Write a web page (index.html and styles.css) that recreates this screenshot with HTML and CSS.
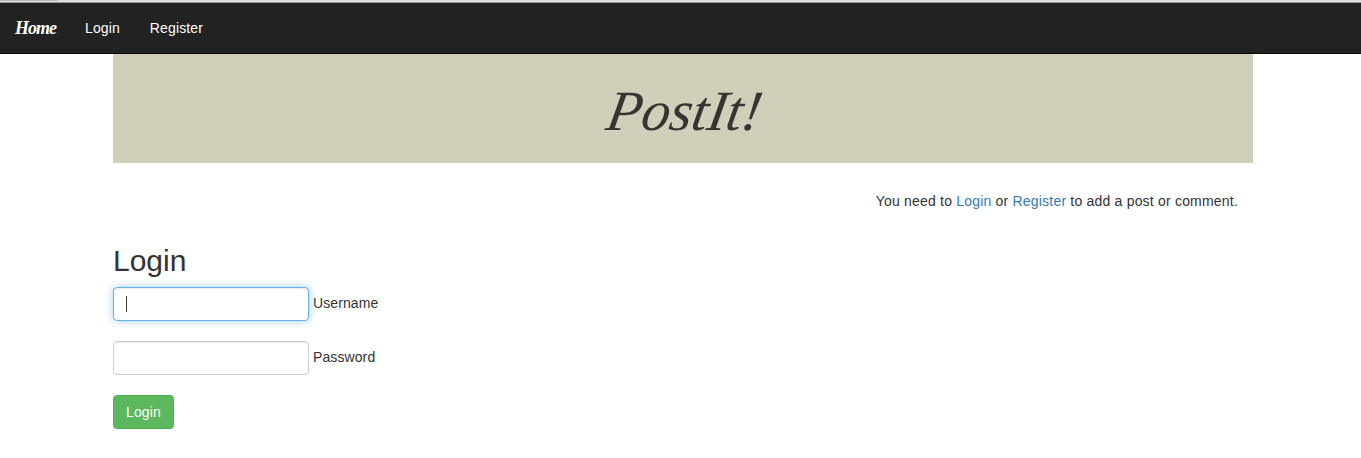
FILE: index.html
```html
<!DOCTYPE html>
<html lang="en">
<head>
  <meta charset="utf-8">
  <title>PostIt!</title>
  <link rel="stylesheet" href="styles.css">
</head>
<body>
  <div class="window-edge"><div class="window-tab"></div></div>
  <nav class="navbar">
    <a class="brand" href="#">Home</a>
    <a class="nav-link" href="#">Login</a>
    <a class="nav-link" href="#">Register</a>
  </nav>
  <main class="container">
    <header class="banner"><span class="banner-title">PostIt!</span></header>
    <p class="notice">You need to <a href="#">Login</a> or <a href="#">Register</a> to add a post or comment.</p>
    <h2 class="heading">Login</h2>
    <form class="form">
      <div class="field">
        <span class="control focused"><input class="input" id="username" type="text"></span>
        <label for="username">Username</label>
      </div>
      <div class="field">
        <span class="control"><input class="input" id="password" type="password"></span>
        <label for="password">Password</label>
      </div>
      <button class="button" type="button">Login</button>
    </form>
  </main>
</body>
</html>
```

FILE: styles.css
```css
* {
  box-sizing: border-box;
}

body {
  margin: 0;
  background: #fff;
  color: #333;
  font: 14px/20px "Liberation Sans", Arial, sans-serif;
  overflow: hidden;
}

a {
  color: #337ab7;
  text-decoration: none;
}

.window-edge {
  height: 3px;
  background: #dcdedc;
  border-bottom: 1px solid #999;
}

.window-tab {
  width: 58px;
  height: 1px;
  background: #bbb;
}

.navbar {
  display: flex;
  height: 51px;
  padding-top: 15px;
  background: #222;
  border-bottom: 1px solid #080808;
}

.navbar a {
  color: #fff;
}

.brand {
  width: 70px;
  padding-left: 15px;
  font: italic bold 18px/20px "Liberation Serif", serif;
  letter-spacing: -1px;
}

.nav-link {
  padding: 0 15px;
  letter-spacing: 0.12px;
}

.container {
  width: 1140px;
  margin-left: 113px;
}

.banner {
  display: flex;
  justify-content: center;
  height: 109px;
  padding-top: 27px;
  background: #d0d0ba;
}

.banner-title {
  color: #383432;
  font: italic 57px/60px "Liberation Serif", serif;
  letter-spacing: -0.2px;
  transform: skewX(-10deg);
}

.notice {
  margin: 28px 15px 0 0;
  text-align: right;
  letter-spacing: 0.2px;
}

.heading {
  margin: 33px 0 10px;
  font-size: 30px;
  font-weight: 500;
  line-height: 33px;
}

.form {
  display: flex;
  flex-direction: column;
  align-items: flex-start;
  gap: 20px;
}

.field {
  display: flex;
  gap: 4px;
  height: 34px;
  line-height: 32px;
  letter-spacing: 0.1px;
}

.control {
  position: relative;
}

.input {
  display: block;
  width: 196px;
  height: 34px;
  padding: 6px 12px;
  font: inherit;
  border: 1px solid #ccc;
  border-radius: 4px;
  box-shadow: inset 0 1px 1px rgba(0, 0, 0, 0.075);
  outline: none;
}

.focused .input {
  border-color: #66afe9;
  box-shadow: inset 0 1px 1px rgba(0, 0, 0, 0.075), 0 0 8px rgba(102, 175, 233, 0.6);
}

/* Text caret of the active field */
.focused::after {
  content: "";
  position: absolute;
  left: 13px;
  top: 9px;
  width: 1px;
  height: 16px;
  background: #333;
}

.button {
  width: 61px;
  height: 34px;
  padding: 0 12px;
  color: #fff;
  font: inherit;
  letter-spacing: 0.15px;
  background: #5cb85c;
  border: 1px solid #4cae4c;
  border-radius: 4px;
}
```
